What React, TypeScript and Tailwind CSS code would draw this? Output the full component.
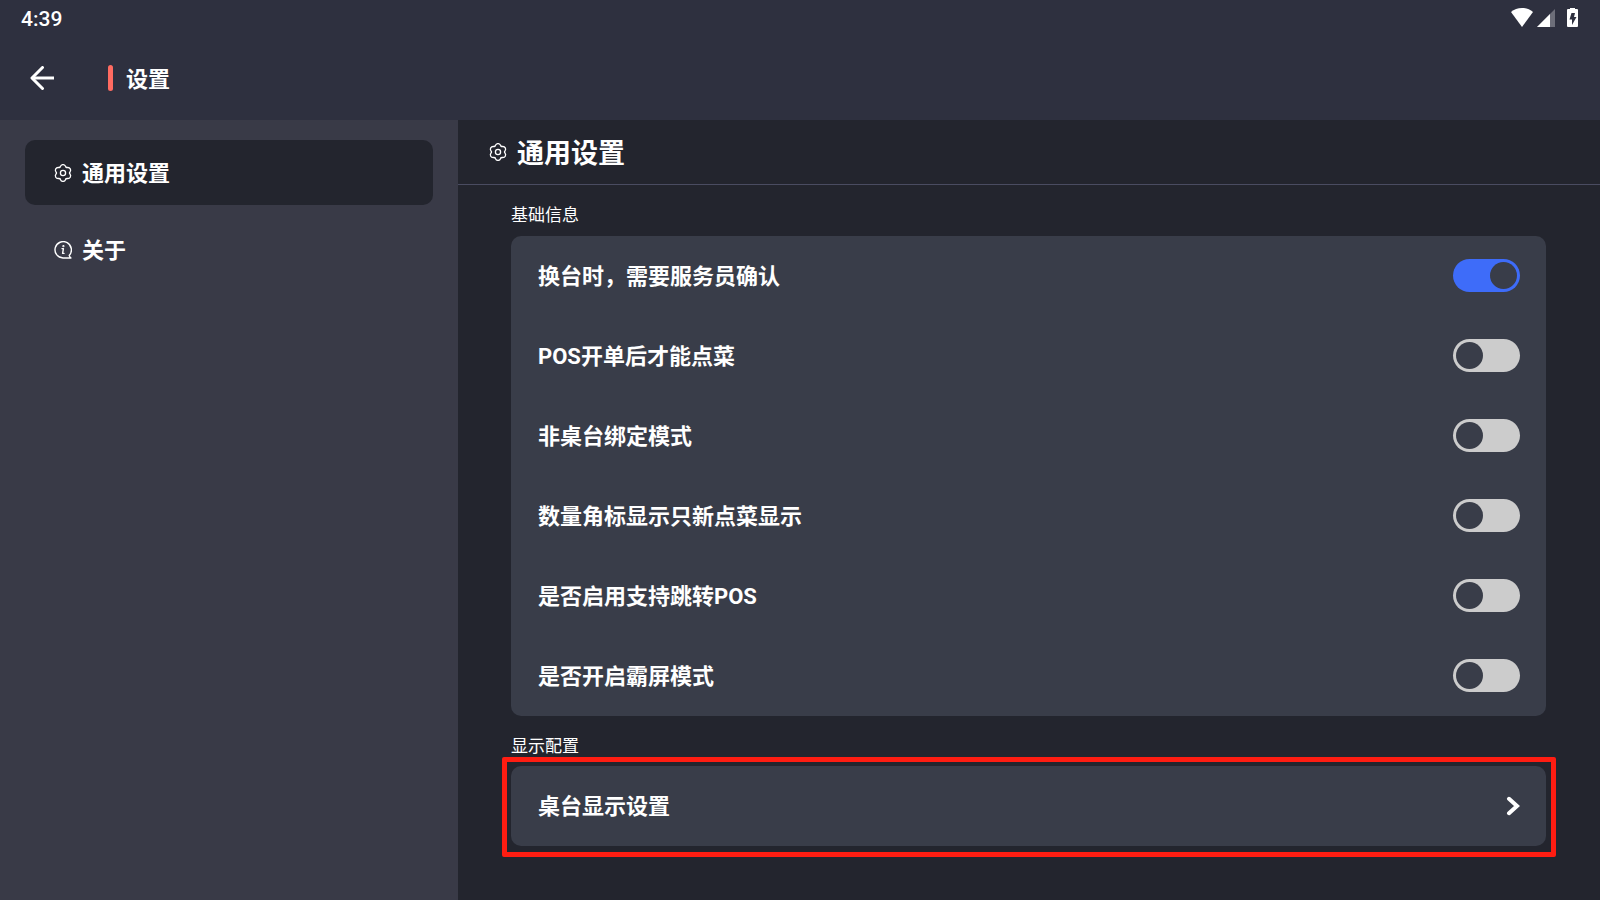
import React, { useState } from "react";

const GearIcon: React.FC = () => (
    <svg
        className="w-[18px] h-[18px] shrink-0"
        viewBox="0 0 18 18"
        fill="none"
        stroke="currentColor"
        strokeWidth="1.3"
        strokeLinecap="round"
        aria-hidden="true"
    >
        {[0, 60, 120, 180, 240, 300].map((angle) => (
            <path
                key={angle}
                d="M5.750 3.370C6.800 2.700 6.400.6 9 .6S11.200 2.700 12.250 3.370"
                transform={`rotate(${angle} 9 9)`}
            />
        ))}
        <circle cx="9" cy="9" r="2.6" />
    </svg>
);

const InfoIcon: React.FC = () => (
    <svg
        className="w-[18px] h-[18px] shrink-0"
        viewBox="0 0 18 18"
        fill="none"
        stroke="currentColor"
        strokeWidth="1.4"
        strokeLinecap="round"
        strokeLinejoin="round"
        aria-hidden="true"
    >
        <path d="M17 17H9A8.2 8.2 0 1 1 15.2 14.4C15.4 15.4 16 16.4 17 17Z" />
        <path d="M8 7.6H9.4L8.6 12.4H10" />
        <circle cx="9.4" cy="5.2" r="0.4" fill="currentColor" />
    </svg>
);

const StatusBar: React.FC = () => (
    <div className="flex items-center justify-between h-9 pl-[21px] pr-[22px]">
        <span className="pt-0.5 text-[21px] leading-8 font-medium">4:39</span>
        <div className="flex items-center">
            <svg
                className="w-[22px] h-5 mr-1"
                viewBox="0 0 22 20"
                fill="currentColor"
                aria-hidden="true"
            >
                <path d="M11 19L0 4C3 1.4 6.800 0 11 0s8 1.400 11 4Z" />
            </svg>
            <svg
                className="w-[18px] h-5 mr-3"
                viewBox="0 0 18 20"
                fill="currentColor"
                aria-hidden="true"
            >
                <path d="M0 19L18 1V19Z" opacity="0.3" />
                <path d="M0 19L13 6V19Z" />
            </svg>
            <svg
                className="w-[11px] h-5"
                viewBox="0 0 11 20"
                aria-hidden="true"
            >
                <path
                    fill="currentColor"
                    d="M3 -1H8V1H10Q11 1 11 2V18Q11 19 10 19H1Q0 19 0 18V2Q0 1 1 1H3Z"
                />
                <path fill="#2e303f" d="M4.500 5H8L7 9H9.500L5 17V11.500H2.500Z" />
            </svg>
        </div>
    </div>
);

const menu = [
    { id: "general", label: "通用设置", icon: <GearIcon /> },
    { id: "about", label: "关于", icon: <InfoIcon /> },
];

const options = [
    { id: "confirm", label: "换台时，需要服务员确认", checked: true },
    { id: "pos-open", label: "POS开单后才能点菜", checked: false },
    { id: "unbound", label: "非桌台绑定模式", checked: false },
    { id: "badge", label: "数量角标显示只新点菜显示", checked: false },
    { id: "pos-jump", label: "是否启用支持跳转POS", checked: false },
    { id: "kiosk", label: "是否开启霸屏模式", checked: false },
];

const ToggleRow: React.FC<{
    id: string;
    label: string;
    defaultChecked: boolean;
}> = ({ id, label, defaultChecked }) => (
    <div className="flex items-center justify-between h-20 pl-[27px] pr-[26px] pb-px">
        <label htmlFor={id} className="pt-0.5 text-[22px] leading-8 font-bold">
            {label}
        </label>
        <input
            id={id}
            type="checkbox"
            role="switch"
            defaultChecked={defaultChecked}
            className="appearance-none shrink-0 w-[67px] h-[33px] p-[3px] rounded-full bg-[#cccccc] checked:bg-[#3e6cf9] cursor-pointer before:block before:w-[27px] before:h-[27px] before:rounded-full before:bg-[#393d49] checked:before:ml-auto"
        />
    </div>
);

const App: React.FC = () => {
    const [active, setActive] = useState("general");

    return (
        <div className="flex flex-col min-h-screen bg-[#23252e] text-white font-[Roboto,'Noto_Sans_CJK_SC',sans-serif]">
            <header className="h-[120px] bg-[#2e303f]">
                <StatusBar />
                <div className="flex items-center h-[84px] pl-[30px]">
                    <button
                        type="button"
                        aria-label="返回"
                        className="cursor-pointer"
                    >
                        <svg
                            className="w-6 h-6"
                            viewBox="0 0 24 24"
                            fill="none"
                            stroke="currentColor"
                            strokeWidth="3"
                            aria-hidden="true"
                        >
                            <path d="M24 12H2.500" />
                            <path
                                d="M12.500 1.500L2 12L12.500 22.500"
                                strokeLinecap="round"
                                strokeLinejoin="round"
                            />
                        </svg>
                    </button>
                    <span className="w-[5px] h-[26px] ml-[54px] mr-[13px] rounded-full bg-[#ff6b61]" />
                    <h1 className="pt-1 text-[22px] leading-8 font-bold">
                        设置
                    </h1>
                </div>
            </header>
            <div className="flex flex-1">
                <nav className="flex flex-col gap-3 w-[458px] shrink-0 px-[25px] py-5 bg-[#393a47]">
                    {menu.map((item) => (
                        <button
                            key={item.id}
                            type="button"
                            onClick={() => setActive(item.id)}
                            className={`flex items-center gap-[10px] h-[65px] px-[29px] rounded-[10px] text-[22px] leading-8 font-bold cursor-pointer ${
                                active === item.id ? "bg-[#23252e]" : ""
                            }`}
                        >
                            {item.icon}
                            <span className="pt-0.5">{item.label}</span>
                        </button>
                    ))}
                </nav>
                <main className="flex-1 min-w-0 pb-10">
                    <div className="flex items-center gap-[10px] h-[65px] pl-[31px] border-b border-[#4a4c61]">
                        <GearIcon />
                        <h2 className="pt-1 text-[27px] leading-10 font-bold">
                            通用设置
                        </h2>
                    </div>
                    <div className="pl-[53px] pr-[54px] pt-px">
                        <h3 className="flex items-center h-[50px] pt-2 text-[17px] leading-6">
                            基础信息
                        </h3>
                        <div className="rounded-[10px] bg-[#393d49]">
                            {options.map((option) => (
                                <ToggleRow
                                    key={option.id}
                                    id={option.id}
                                    label={option.label}
                                    defaultChecked={option.checked}
                                />
                            ))}
                        </div>
                        <h3 className="flex items-center h-[50px] pt-[10px] text-[17px] leading-6">
                            显示配置
                        </h3>
                        <div className="relative">
                            <button
                                type="button"
                                className="flex items-center justify-between w-full h-20 pl-[27px] pr-[26px] rounded-[10px] bg-[#393d49] text-[22px] leading-8 font-bold cursor-pointer"
                            >
                                <span className="pt-0.5">桌台显示设置</span>
                                <svg
                                    className="w-[14px] h-5"
                                    viewBox="0 0 14 20"
                                    fill="none"
                                    stroke="currentColor"
                                    strokeWidth="4"
                                    strokeLinecap="round"
                                    aria-hidden="true"
                                >
                                    <path d="M3 2.800L11 10L3 17.200" />
                                </svg>
                            </button>
                            <div className="absolute -left-[9px] -right-[10px] -top-[9px] -bottom-[11px] border-[5px] border-[#ff1d12] rounded-[2px] pointer-events-none" />
                        </div>
                    </div>
                </main>
            </div>
        </div>
    );
};

export default App;
